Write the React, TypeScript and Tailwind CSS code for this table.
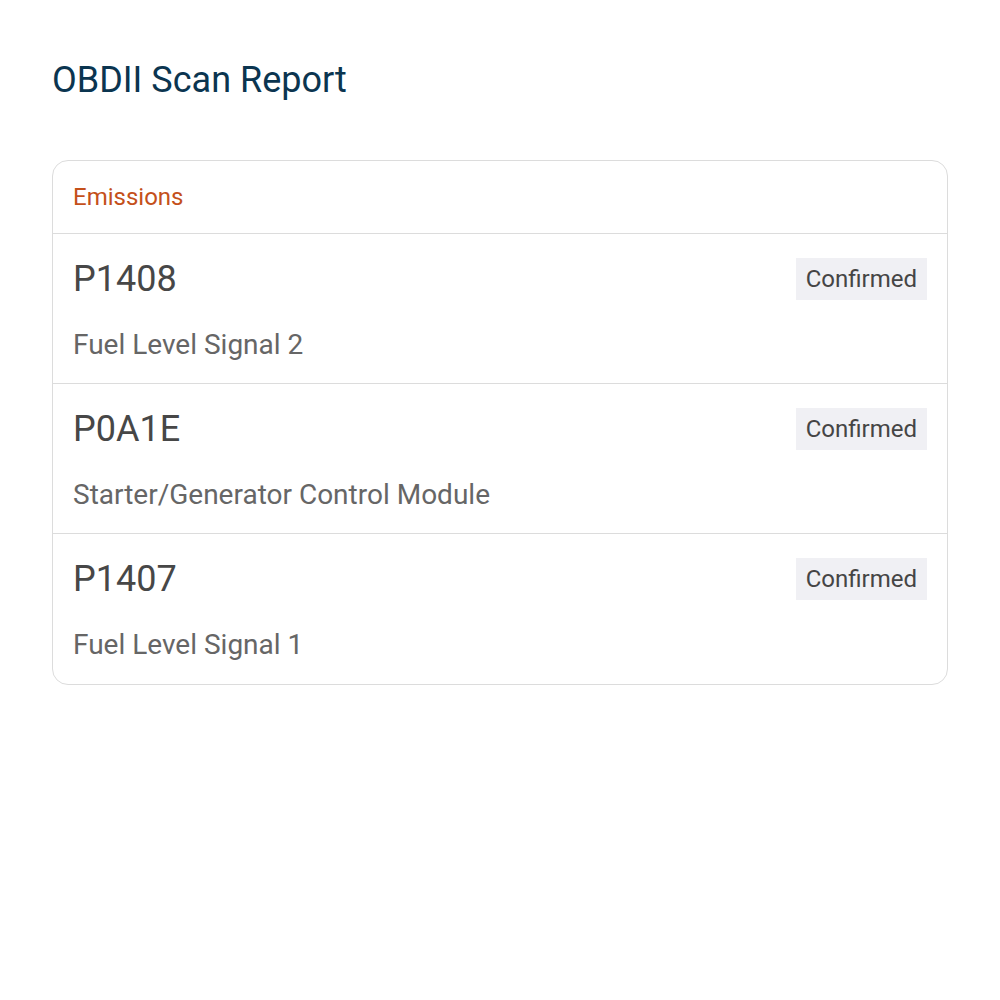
import React from "react";

const rows = [
  { code: "P1408", desc: "Fuel Level Signal 2" },
  { code: "P0A1E", desc: "Starter/Generator Control Module" },
  { code: "P1407", desc: "Fuel Level Signal 1" },
];

export default function App() {
  return (
    <div className="min-h-[1000px] bg-white px-[52px] pt-[56px]" style={{ fontFamily: "Roboto, sans-serif" }}>
      <h1 className="text-[36px] leading-[48px] text-[#0b3550] font-normal">OBDII Scan Report</h1>
      <div className="mt-[56px] rounded-[16px] border border-[#dcdcdc] overflow-hidden">
        <div className="h-[73px] flex items-center px-[20px] text-[24px] text-[#c4501a] border-b border-[#dcdcdc]">
          Emissions
        </div>
        {rows.map((r, i) => (
          <div key={r.code} className={`h-[150px] px-[20px] pt-[24px] ${i < rows.length - 1 ? "border-b border-[#dcdcdc]" : ""}`}>
            <div className="flex items-center justify-between h-[42px]">
              <span className="text-[36px] leading-[42px] text-[#474747]">{r.code}</span>
              <span className="bg-[#f0f0f4] h-[42px] px-[10px] flex items-center text-[24px] text-[#454545]">Confirmed</span>
            </div>
            <div className="mt-[29px] text-[28px] leading-[32px] text-[#666666]">{r.desc}</div>
          </div>
        ))}
      </div>
    </div>
  );
}
